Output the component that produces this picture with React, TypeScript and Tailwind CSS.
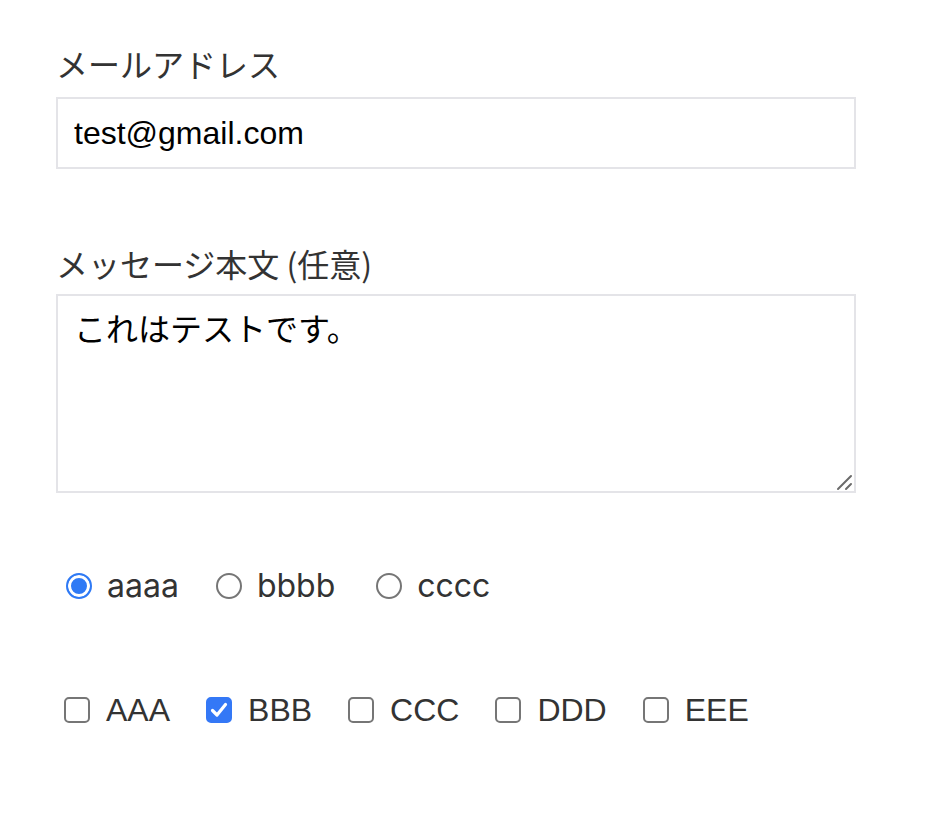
import { useState } from "react"

const labelFont = "font-['Noto_Sans_CJK_JP','Noto_Sans',sans-serif]"
const fieldFont = "font-['Liberation_Sans','Noto_Sans_CJK_JP',sans-serif]"

const radios = [
  { name: "aaaa", cls: "" },
  { name: "bbbb", cls: "mr-[4px]" },
  { name: "cccc", cls: "" },
]
const checks = ["AAA", "BBB", "CCC", "DDD", "EEE"]

export default function App() {
  const [email, setEmail] = useState("test@gmail.com")
  const [body, setBody]   = useState("これはテストです。")
  const [picked, setPicked] = useState("aaaa")
  const [checked, setChecked] = useState<string[]>(["BBB"])

  function toggle(name: string) {
    setChecked(prev => prev.includes(name) ? prev.filter(n => n !== name) : [...prev, name])
  }

  return (
    <div className="min-h-[824px] w-[940px] bg-white pl-[56px] pt-[39px]">
      <form className="flex flex-col w-[800px]" onSubmit={e => e.preventDefault()}>
        <label className={`${labelFont} block text-[32px] leading-[48px] text-[#333] mb-[10px]`}>
          メールアドレス
        </label>
        <input value={email} onChange={e => setEmail(e.target.value)}
          className={`${fieldFont} h-[72px] w-[800px] border-2 border-[#e4e4e8] px-[16px] text-[32px] text-black outline-none`} />

        <label className={`${labelFont} block text-[32px] leading-[48px] text-[#333] mt-[70px] mb-[7px]`}>
          メッセージ本文 (任意)
        </label>
        <div className="relative h-[199px] w-[800px]">
          <textarea value={body} onChange={e => setBody(e.target.value)}
            className={`${fieldFont} h-full w-full resize-none border-2 border-[#e4e4e8] p-[16px] text-[32px] leading-[36px] text-black outline-none`} />
          <svg className="pointer-events-none absolute right-[3px] bottom-[2px]" width="18" height="18" viewBox="0 0 18 18">
            <path d="M3 16 L16 3 M11 16 L16 11" stroke="#6b6b6b" strokeWidth="2" strokeLinecap="round" />
          </svg>
        </div>

        <div className="mt-[69px] flex h-[48px] items-center gap-[37px] pl-[10px]">
          {radios.map(({ name, cls }) => (
            <label key={name} className={`flex items-center gap-[15px] cursor-pointer ${cls}`}>
              <input type="radio" name="pick" checked={picked === name} onChange={() => setPicked(name)}
                className="m-0 h-[26px] w-[26px] appearance-none rounded-full border-2 border-[#767676] bg-white checked:border-[#2f7af5] checked:bg-[#2f7af5] checked:shadow-[inset_0_0_0_3px_white]" />
              <span className="font-['Inter',sans-serif] text-[32px] text-[#333]">{name}</span>
            </label>
          ))}
        </div>

        <div className="mt-[76px] flex h-[48px] items-center gap-[36px] pl-[8px]">
          {checks.map(name => (
            <label key={name} className="flex items-center gap-[16px] cursor-pointer">
              <span className="relative flex h-[26px] w-[26px]">
                <input type="checkbox" checked={checked.includes(name)} onChange={() => toggle(name)}
                  className="peer m-0 h-[26px] w-[26px] appearance-none rounded-[5px] border-2 border-[#767676] bg-white checked:border-[#3478f6] checked:bg-[#3478f6]" />
                <svg className="pointer-events-none absolute inset-0 hidden peer-checked:block" viewBox="0 0 26 26" width="26" height="26">
                  <path d="M6.5 13.5 L11 18 L19.5 7.5" fill="none" stroke="white" strokeWidth="3.2" strokeLinecap="round" strokeLinejoin="round" />
                </svg>
              </span>
              <span className="font-['Liberation_Sans',sans-serif] text-[32px] text-[#333]">{name}</span>
            </label>
          ))}
        </div>
      </form>
    </div>
  )
}
